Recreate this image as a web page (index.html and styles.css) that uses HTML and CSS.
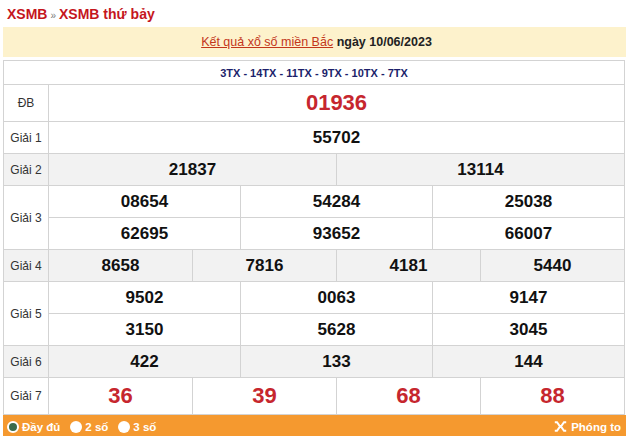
FILE: index.html
```html
<!DOCTYPE html>
<html lang="vi">
<head>
<meta charset="utf-8">
<title>XSMB thứ bảy</title>
<link rel="stylesheet" href="styles.css">
</head>
<body>
<div class="wrap">
  <div class="crumb"><a class="crumb-link">XSMB</a><span class="sep">»</span><a class="crumb-link">XSMB thứ bảy</a></div>
  <div class="datebar"><a class="datelink">Kết quả xổ số miền Bắc</a> <b>ngày 10/06/2023</b></div>
  <table class="kq">
    <colgroup>
      <col class="c-label">
      <col><col><col><col><col><col><col><col><col><col><col><col>
    </colgroup>
    <tr class="r-code"><td colspan="13" class="codes">3TX - 14TX - 11TX - 9TX - 10TX - 7TX</td></tr>
    <tr class="r-big"><td class="lbl">ĐB</td><td colspan="12" class="num red">01936</td></tr>
    <tr class="r"><td class="lbl">Giải 1</td><td colspan="12" class="num">55702</td></tr>
    <tr class="r alt"><td class="lbl">Giải 2</td><td colspan="6" class="num">21837</td><td colspan="6" class="num">13114</td></tr>
    <tr class="r"><td class="lbl" rowspan="2">Giải 3</td><td colspan="4" class="num">08654</td><td colspan="4" class="num">54284</td><td colspan="4" class="num">25038</td></tr>
    <tr class="r"><td colspan="4" class="num">62695</td><td colspan="4" class="num">93652</td><td colspan="4" class="num">66007</td></tr>
    <tr class="r alt"><td class="lbl">Giải 4</td><td colspan="3" class="num">8658</td><td colspan="3" class="num">7816</td><td colspan="3" class="num">4181</td><td colspan="3" class="num">5440</td></tr>
    <tr class="r"><td class="lbl" rowspan="2">Giải 5</td><td colspan="4" class="num">9502</td><td colspan="4" class="num">0063</td><td colspan="4" class="num">9147</td></tr>
    <tr class="r"><td colspan="4" class="num">3150</td><td colspan="4" class="num">5628</td><td colspan="4" class="num">3045</td></tr>
    <tr class="r alt"><td class="lbl">Giải 6</td><td colspan="4" class="num">422</td><td colspan="4" class="num">133</td><td colspan="4" class="num">144</td></tr>
    <tr class="r-big"><td class="lbl">Giải 7</td><td colspan="3" class="num red">36</td><td colspan="3" class="num red">39</td><td colspan="3" class="num red">68</td><td colspan="3" class="num red">88</td></tr>
  </table>
  <div class="foot">
    <div class="opts">
      <span class="opt"><span class="radio on"></span>Đầy đủ</span>
      <span class="opt"><span class="radio"></span>2 số</span>
      <span class="opt"><span class="radio"></span>3 số</span>
    </div>
    <span class="zoom"><svg class="zicon" width="13" height="11" viewBox="0 0 13 11"><path d="M0.8 1.2 H3 L6 5.5 L3 9.8 H0.8 M12.2 1.2 H10 L7 5.5 L10 9.8 H12.2" fill="none" stroke="#fff" stroke-width="2"/></svg>Phóng to</span>
  </div>
</div>
</body>
</html>
```

FILE: styles.css
```css
* { box-sizing: border-box; }
html, body { margin: 0; padding: 0; background: #fff; }
body { font-family: Arial, "Liberation Sans", sans-serif; color: #222; }
.wrap { width: 623px; margin-left: 3px; }
.crumb { height: 27px; padding: 5px 0 0 4px; font-size: 14px; font-weight: bold; line-height: 18px; }
.crumb-link { color: #c5161d; text-decoration: none; }
.sep { color: #777; font-size: 10px; font-weight: normal; margin: 0 3px; }
.datebar { height: 30px; background: #fdf2cc; text-align: center; font-size: 12.5px; line-height: 30px; color: #222; padding-left: 4px; }
.datelink { color: #c3361b; text-decoration: underline; }
.datebar b { color: #222; }
.kq { margin-top: 3px; width: 622px; table-layout: fixed; border-collapse: collapse; border: 1px solid #d3d3d3; }
.kq td { border: 1px solid #d3d3d3; padding: 0; text-align: center; }
.c-label { width: 45px; }
.codes { height: 24px; font-size: 11px; font-weight: bold; color: #1c1f6b; }
.lbl { font-size: 12px; color: #333; }
.r td { height: 32px; }
.r-big td { height: 37px; }
.alt td { background: #f2f2f2; }
.num { font-size: 17px; font-weight: bold; color: #111; }
.num.red { font-size: 22px; color: #c6262e; }
.foot { height: 23px; background: #f5992f; display: flex; align-items: center; justify-content: space-between; padding: 0 5px 0 4px; color: #fff; font-size: 11.5px; font-weight: bold; }
.opts { display: flex; align-items: center; gap: 10px; }
.opt { display: flex; align-items: center; gap: 3px; }
.radio { width: 12px; height: 12px; border-radius: 50%; background: #fff; display: inline-block; }
.radio.on { background: #3b6b4a; border: 2px solid #fff; }
.zoom { display: flex; align-items: center; gap: 4px; }
.zicon { display: block; }
```
